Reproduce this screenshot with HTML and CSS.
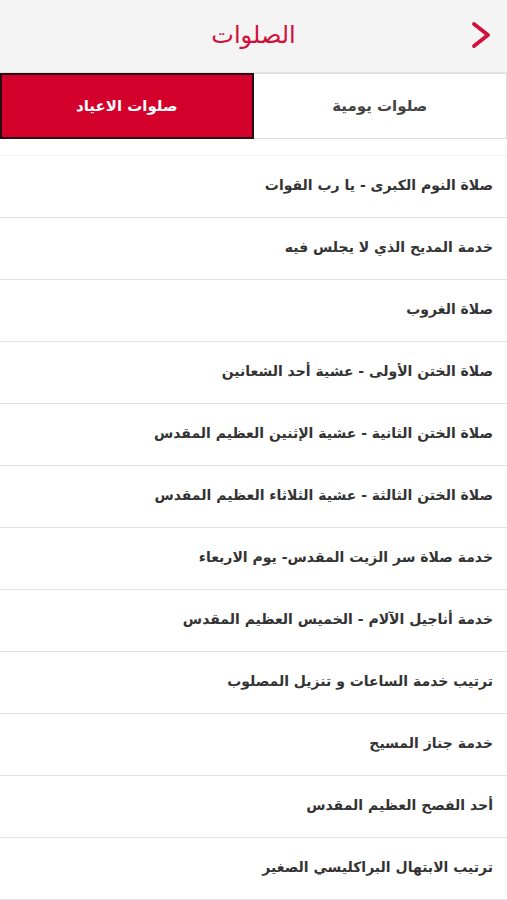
FILE: index.html
```html
<!DOCTYPE html>
<html lang="ar" dir="rtl">
<head>
    <meta charset="UTF-8">
    <meta name="viewport" content="width=device-width, initial-scale=1.0">
    <title>الصلوات</title>

    <link rel="stylesheet" href="styles.css">
</head>
<body>
    <header class="topbar">
        <a class="back" href="#">
            <svg width="22" height="30" viewBox="0 0 22 30">
                <path d="M4 4 L18 15 L4 26" fill="none" stroke="#d0103a" stroke-width="3.8" stroke-linecap="round" stroke-linejoin="round"/>
            </svg>
        </a>
        <h1 class="title">الصلوات</h1>
    </header>

    <nav class="tabs">
        <a class="tab" href="#">صلوات يومية</a>
        <a class="tab active" href="#">صلوات الاعياد</a>
    </nav>

    <ul class="prayers">
        <li>صلاة النوم الكبرى - يا رب القوات</li>
        <li>خدمة المديح الذي لا يجلس فيه</li>
        <li>صلاة الغروب</li>
        <li>صلاة الختن الأولى - عشية أحد الشعانين</li>
        <li>صلاة الختن الثانية - عشية الإثنين العظيم المقدس</li>
        <li>صلاة الختن الثالثة - عشية الثلاثاء العظيم المقدس</li>
        <li>خدمة صلاة سر الزيت المقدس- يوم الاربعاء</li>
        <li>خدمة أناجيل الآلام - الخميس العظيم المقدس</li>
        <li>ترتيب خدمة الساعات و تنزيل المصلوب</li>
        <li>خدمة جناز المسيح</li>
        <li>أحد الفصح العظيم المقدس</li>
        <li>ترتيب الابتهال البراكليسي الصغير</li>
    </ul>
</body>
</html>
```

FILE: styles.css
```css
/* page */
body {
    margin: 0;
    background-color: #fff;
    font-family: "DejaVu Sans", sans-serif;
    color: #333;
}

/* top bar */
.topbar {
    position: relative;
    height: 72px;
    background-color: #f4f4f4;
    border-bottom: 1px solid #e4e4e4;
    display: flex;
    align-items: center;
    justify-content: center;
}

.title {
    margin: 0 0 2px;
    font-size: 24px;
    font-weight: normal;
    color: #d0103a;
}

.back {
    position: absolute;
    right: 15px;
    top: 20px;
    display: block;
    line-height: 0;
}

/* tabs */
.tabs {
    display: grid;
    grid-template-columns: 1fr 1fr;
    height: 66px;
}

.tab {
    display: flex;
    align-items: center;
    justify-content: center;
    text-decoration: none;
    font-size: 15px;
    font-weight: bold;
    color: #444;
    background-color: #fff;
    border: 1px solid #ddd;
    border-left: none;
}

.tab.active {
    background-color: #d3002b;
    color: #fff;
    border: 2px solid #2b0b12;
}

/* list */
.prayers {
    list-style: none;
    margin: 16px 0 0;
    padding: 0;
    border-top: 1px solid #f2f2f2;
}

.prayers li {
    box-sizing: border-box;
    height: 62px;
    display: flex;
    align-items: center;
    padding: 0 14px 3px;
    font-size: 14px;
    font-weight: bold;
    color: #333;
    border-bottom: 1px solid #e2e2e2;
}
```
